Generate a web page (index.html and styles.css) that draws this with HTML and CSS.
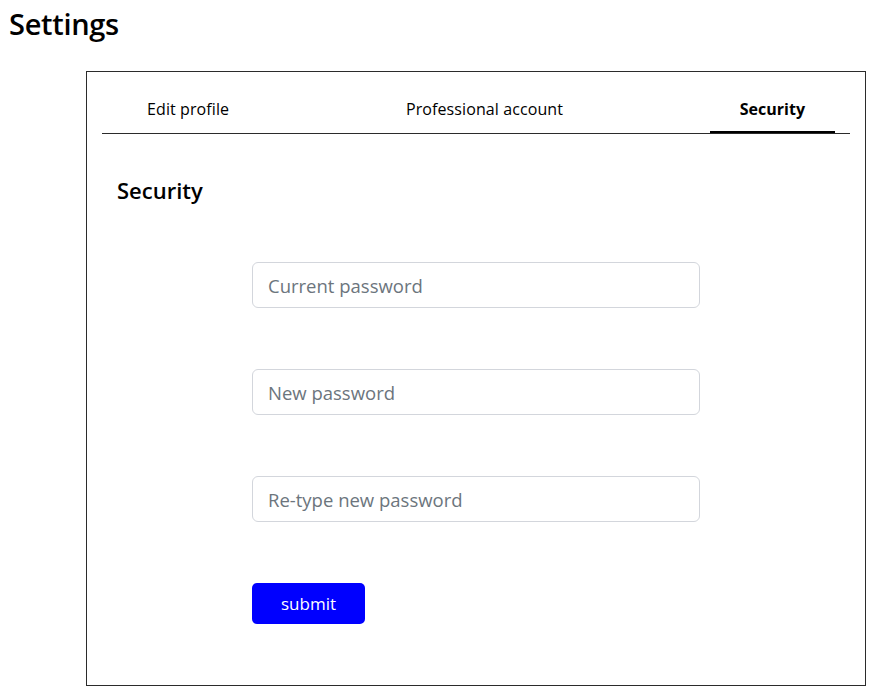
FILE: index.html
```html
<!DOCTYPE html>
<html lang="en">
<head>
<meta charset="utf-8">
<title>Settings</title>
<link rel="stylesheet" href="styles.css">
</head>
<body>
  <h1 class="page-title">Settings</h1>
  <div class="card">
    <nav class="tabs">
      <a class="tab" href="#">Edit profile</a>
      <a class="tab" href="#">Professional account</a>
      <a class="tab active" href="#">Security</a>
    </nav>
    <h2 class="section-title">Security</h2>
    <form class="form">
      <input class="field" type="password" placeholder="Current password">
      <input class="field" type="password" placeholder="New password">
      <input class="field" type="password" placeholder="Re-type new password">
      <button class="submit" type="button">submit</button>
    </form>
  </div>
</body>
</html>
```
FILE: styles.css
```css
* { box-sizing: border-box; }
html, body { margin: 0; padding: 0; background: #fff; }
body {
  font-family: "Open Sans", "Noto Sans", "Liberation Sans", sans-serif;
  color: #000;
  padding: 0 30px 0 9px;
}
.page-title {
  font-size: 29px;
  font-weight: 600;
  line-height: 34px;
  margin: 7px 0 30px 0;
  letter-spacing: -0.3px;
}
.card {
  margin-left: 77px;
  width: 780px;
  border: 1px solid #2b2b2b;
  padding: 15px 15px 15px 15px;
}
.tabs {
  display: flex;
  justify-content: space-between;
  padding: 0 15px;
  border-bottom: 1px solid #2b2b2b;
}
.tab {
  display: block;
  padding: 10px 30px 10px;
  line-height: 24px;
  font-size: 16px;
  color: #000;
  text-decoration: none;
  border-bottom: 2px solid transparent;
  letter-spacing: 0.1px;
}
.tab.active {
  font-weight: 700;
  border-bottom-color: #000;
  letter-spacing: 0;
}
.section-title {
  font-size: 22px;
  font-weight: 600;
  line-height: 28px;
  margin: 42px 0 0 15px;
  letter-spacing: 0;
}
.form {
  display: flex;
  flex-direction: column;
  align-items: flex-start;
  gap: 61px;
  margin: 58px 0 46px 150px;
}
.field {
  width: 448px;
  height: 46px;
  border: 1px solid #d3d6dc;
  border-radius: 6px;
  padding: 0 15px;
  font-family: inherit;
  font-size: 18.5px;
  color: #212529;
  outline: none;
}
.field::placeholder { color: #6c757d; }
.submit {
  width: 113px;
  height: 41px;
  background: #0000ff;
  color: #fff;
  border: none;
  border-radius: 5px;
  font-family: inherit;
  font-size: 17px;
  cursor: pointer;
}
```
